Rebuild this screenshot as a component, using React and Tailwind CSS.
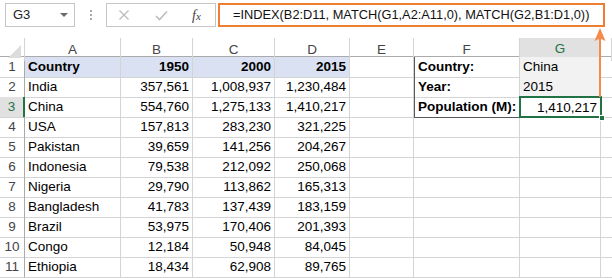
import React from "react";

const cols = ["A", "B", "C", "D", "E", "F", "G", ""];

const data = [
    ["Country", "1950", "2000", "2015"],
    ["India", "357,561", "1,008,937", "1,230,484"],
    ["China", "554,760", "1,275,133", "1,410,217"],
    ["USA", "157,813", "283,230", "321,225"],
    ["Pakistan", "39,659", "141,256", "204,267"],
    ["Indonesia", "79,538", "212,092", "250,068"],
    ["Nigeria", "29,790", "113,862", "165,313"],
    ["Bangladesh", "41,783", "137,439", "183,159"],
    ["Brazil", "53,975", "170,406", "201,393"],
    ["Congo", "12,184", "50,948", "84,045"],
    ["Ethiopia", "18,434", "62,908", "89,765"],
];

const lookup = [
    ["Country:", "China"],
    ["Year:", "2015"],
    ["Population (M):", "1,410,217"],
];

const grid =
    "grid grid-cols-[25px_96px_72px_82px_75px_64px_106px_81px_1fr]";

export default function App() {
    return (
        <div className="relative h-[278px] w-[612px] overflow-hidden bg-white font-['Liberation_Sans',Arial,sans-serif] text-[13.5px] text-black">
            {/* formula bar */}
            <div className="flex h-[38px] items-start pt-[3px]">
                <div className="ml-[5px] flex h-[24px] w-[70px] items-center justify-between border border-[#c6c6c6] pl-[7px] pr-[6px]">
                    <span className="text-[13px] text-[#222]">G3</span>
                    <span className="h-0 w-0 border-x-[4px] border-t-[4px] border-x-transparent border-t-[#6b6b6b]" />
                </div>
                <div className="ml-[15px] flex h-[24px] flex-col items-center justify-center gap-[2px]">
                    <span className="h-[2px] w-[2px] bg-[#a8a8a8]" />
                    <span className="h-[2px] w-[2px] bg-[#a8a8a8]" />
                    <span className="h-[2px] w-[2px] bg-[#a8a8a8]" />
                </div>
                <div className="ml-[14px] flex h-[24px] w-[110px] items-center border border-[#c6c6c6]">
                    <svg width="12" height="12" viewBox="0 0 12 12" className="ml-[11px]">
                        <path d="M1.5 1.5l9 9M10.5 1.5l-9 9" stroke="#bdbdbd" strokeWidth="1.4" />
                    </svg>
                    <svg width="13" height="11" viewBox="0 0 13 11" className="ml-[25px]">
                        <path d="M1 6l3.5 3.5L12 1.5" stroke="#bdbdbd" strokeWidth="1.6" fill="none" />
                    </svg>
                    <span className="ml-[24px] font-['Liberation_Serif',serif] text-[14px] italic text-[#444]">
                        f<span className="text-[11px]">x</span>
                    </span>
                </div>
                <div className="ml-[2px] flex h-[24px] w-[387px] items-center border-2 border-[#ef7e35] pl-[13px] text-[12.8px] text-[#111]">
                    =INDEX(B2:D11, MATCH(G1,A2:A11,0), MATCH(G2,B1:D1,0))
                </div>
            </div>

            {/* column headers */}
            <div className={`${grid} h-[19px] border-b border-[#ababab] text-[#444]`}>
                <div className="relative border-r border-[#d4d4d4]">
                    <span className="absolute bottom-[3px] right-[3px] h-0 w-0 border-b-[13px] border-l-[13px] border-b-[#dcdcdc] border-l-transparent" />
                </div>
                {cols.map((c, i) =>
                    c === "G" ? (
                        <div
                            key={i}
                            className="flex items-center justify-center border-b-2 border-r border-b-[#217346] border-r-[#d4d4d4] bg-[#e1e1e1] pt-[1px] text-[#217346]"
                        >
                            {c}
                        </div>
                    ) : (
                        <div
                            key={i}
                            className="flex items-center justify-center border-r border-[#d4d4d4] pt-[1px]"
                        >
                            {c}
                        </div>
                    ),
                )}
            </div>

            {/* rows */}
            {data.map((row, r) => {
                const head = r === 0;
                const cellBg = head ? "bg-[#d9e1f2] font-bold" : "";
                const lk = lookup[r];
                return (
                    <div key={r} className={`${grid} h-[20px]`}>
                        <div
                            className={`flex items-center justify-center border-b border-[#d4d4d4] ${
                                r === 2
                                    ? "border-r-2 border-r-[#217346] bg-[#e1e1e1] text-[#217346]"
                                    : "border-r border-r-[#ababab] text-[#444]"
                            }`}
                        >
                            {r + 1}
                        </div>
                        <div className={`flex items-center border-b border-r border-[#d4d4d4] pl-[3px] ${cellBg}`}>
                            {row[0]}
                        </div>
                        {row.slice(1).map((v, j) => (
                            <div
                                key={j}
                                className={`flex items-center justify-end border-b border-r border-[#d4d4d4] pr-[3px] ${cellBg}`}
                            >
                                {v}
                            </div>
                        ))}
                        <div className="border-b border-r border-[#d4d4d4]" />
                        {lk ? (
                            <>
                                <div
                                    className={`flex items-center border-l border-r border-l-[#595959] border-r-[#d4d4d4] pl-[3px] font-bold ${
                                        r === 2 ? "border-b border-b-[#595959]" : "border-b border-b-[#d4d4d4]"
                                    }`}
                                >
                                    {lk[0]}
                                </div>
                                {r === 2 ? (
                                    <div className="relative flex items-center justify-end pr-[4px]">
                                        {lk[1]}
                                        <span className="absolute -left-[1px] -top-[1px] h-[22px] w-[83px] border-2 border-[#217346]" />
                                        <span className="absolute -bottom-[3px] -right-[4px] h-[6px] w-[6px] border border-white bg-[#217346]" />
                                    </div>
                                ) : (
                                    <div className="flex items-center border-b border-r border-b-[#d4d4d4] border-r-[#595959] bg-[#f2f2f2] pl-[3px]">
                                        {lk[1]}
                                    </div>
                                )}
                            </>
                        ) : (
                            <>
                                <div className="border-b border-r border-[#d4d4d4]" />
                                <div className="border-b border-r border-[#d4d4d4]" />
                            </>
                        )}
                        <div className="border-b border-[#d4d4d4]" />
                    </div>
                );
            })}

            {/* arrow from G3 to the formula bar */}
            <svg
                className="absolute left-[592px] top-[26px]"
                width="16"
                height="72"
                viewBox="0 0 16 72"
            >
                <path d="M8 10V71" stroke="#f58a4b" strokeWidth="2" />
                <path d="M8 2L2.5 15L8 12.5L13.5 15Z" fill="#f58a4b" />
            </svg>
        </div>
    );
}
